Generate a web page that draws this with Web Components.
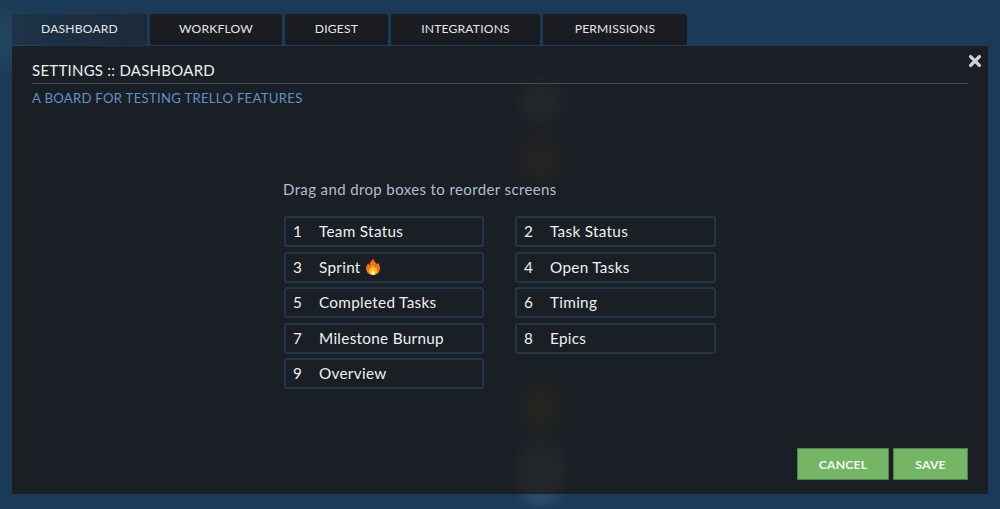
<!DOCTYPE html>
<html>
<head>
<meta charset="utf-8">
<title>Settings</title>
<style>
  html, body { margin: 0; height: 100%; }
  body {
    background:
      radial-gradient(ellipse 26px 12px at 541px 498px, #2f5270, transparent),
      radial-gradient(ellipse 50px 40px at 5px 40px, #24465f, transparent),
      #1b3a57;
    overflow: hidden;
    font-family: Lato, "Open Sans", sans-serif;
  }
</style>
</head>
<body>
<settings-dialog>
  <tab-button active style="width:135px">DASHBOARD</tab-button>
  <tab-button style="width:132px">WORKFLOW</tab-button>
  <tab-button style="width:103px">DIGEST</tab-button>
  <tab-button style="width:149px">INTEGRATIONS</tab-button>
  <tab-button style="width:144px">PERMISSIONS</tab-button>

  <screen-box slot="screens" num="1">Team Status</screen-box>
  <screen-box slot="screens" num="2">Task Status</screen-box>
  <screen-box slot="screens" num="3">Sprint <fire-icon></fire-icon></screen-box>
  <screen-box slot="screens" num="4">Open Tasks</screen-box>
  <screen-box slot="screens" num="5">Completed Tasks</screen-box>
  <screen-box slot="screens" num="6">Timing</screen-box>
  <screen-box slot="screens" num="7">Milestone Burnup</screen-box>
  <screen-box slot="screens" num="8">Epics</screen-box>
  <screen-box slot="screens" num="9">Overview</screen-box>

  <green-button slot="actions" style="width:92px">CANCEL</green-button>
  <green-button slot="actions" style="width:75px">SAVE</green-button>
</settings-dialog>

<script>
class TabButton extends HTMLElement {
  constructor() {
    super();
    this.attachShadow({ mode: 'open' });
    this.shadowRoot.innerHTML = `
      <style>
        :host {
          display: flex;
          align-items: center;
          justify-content: center;
          box-sizing: border-box;
          height: 31px;
          padding-bottom: 2px;
          background: #1a1c21;
          border-radius: 2px;
          color: #e4e6e8;
          font-size: 12.1px;
          letter-spacing: 0.2px;
        }
        :host([active]) {
          background: linear-gradient(90deg, #1d3348, #1c2a39);
        }
      </style>
      <slot></slot>
    `;
  }
}

class ScreenBox extends HTMLElement {
  constructor() {
    super();
    this.attachShadow({ mode: 'open' });
    this.shadowRoot.innerHTML = `
      <style>
        :host {
          display: flex;
          align-items: center;
          box-sizing: border-box;
          height: 31px;
          padding-bottom: 1px;
          border: 2px solid #22364a;
          border-radius: 3px;
          color: #eef0f1;
          font-size: 15.3px;
          letter-spacing: 0.3px;
        }
        .num { width: 33px; padding-left: 7px; box-sizing: border-box; }
      </style>
      <span class="num"></span><span><slot></slot></span>
    `;
    this.shadowRoot.querySelector('.num').textContent = this.getAttribute('num');
  }
}

class FireIcon extends HTMLElement {
  constructor() {
    super();
    this.attachShadow({ mode: 'open' });
    this.shadowRoot.innerHTML = `
      <style>
        :host { display: inline-block; width: 14px; height: 16px; vertical-align: -2px; margin-left: 1px; }
        svg { display: block; }
      </style>
      <svg width="14" height="16" viewBox="0 0 14 16">
        <path fill="#f0701c" d="M7.500 0c.6 2.600 2.200 3.600 3.600 5.400.4-.5.6-1.100.6-1.800C13.200 5.200 14 7.200 14 9.400 14 13.200 11 16 7 16S0 13.200 0 9.500c0-2.400 1.300-3.900 2.500-5.300.1.900.4 1.500 1 2C3.500 3.800 5 1.500 7.500 0z"/>
        <path fill="#fcc21b" d="M7.300 6.500c.3 1.500 1.300 2.200 2.200 3.300.3-.2.500-.5.600-.9.800 1 1.200 2 1.200 3 0 2.300-1.900 4-4.300 4S2.700 14.200 2.700 12c0-1.400.7-2.400 1.600-3.200.1.500.3.800.6 1.100C5 8.500 5.900 7.300 7.300 6.500z"/>
        <path fill="#fff3c4" d="M7 11.500c.7.800 1.800 1.500 1.800 2.800 0 1-.8 1.700-1.800 1.700s-1.800-.7-1.800-1.700c0-1.300 1.100-2 1.800-2.800z"/>
      </svg>
    `;
  }
}

class GreenButton extends HTMLElement {
  constructor() {
    super();
    this.attachShadow({ mode: 'open' });
    this.shadowRoot.innerHTML = `
      <style>
        :host {
          display: flex;
          align-items: center;
          justify-content: center;
          box-sizing: border-box;
          height: 32px;
          background: #74b566;
          border: 1px solid #4c8348;
          color: #f3f8f1;
          font-size: 12.2px;
          font-weight: 700;
          letter-spacing: 0.2px;
        }
      </style>
      <slot></slot>
    `;
  }
}

class SettingsDialog extends HTMLElement {
  constructor() {
    super();
    this.attachShadow({ mode: 'open' });
    this.shadowRoot.innerHTML = `
      <style>
        :host {
          display: flex;
          flex-direction: column;
          box-sizing: border-box;
          width: 1000px;
          height: 509px;
          padding: 14px 12px 15px;
        }
        .tabs { display: flex; gap: 3px; margin-bottom: 1px; }
        .panel {
          position: relative;
          flex: 1;
          display: flex;
          flex-direction: column;
          padding: 0 20px;
          background:
            radial-gradient(ellipse 34px 36px at 529px 56px, #23272a 25%, transparent),
            radial-gradient(ellipse 34px 34px at 529px 114px, #232420 20%, transparent),
            radial-gradient(ellipse 34px 36px at 529px 362px, #232420 20%, transparent),
            radial-gradient(ellipse 36px 42px at 529px 425px, #25282a 30%, transparent),
            radial-gradient(ellipse 130px 16px at 640px 60px, #1b2027, transparent),
            radial-gradient(ellipse 90px 14px at 620px 114px, #1b2027, transparent),
            #1a1e25;
        }
        .title {
          margin-top: 15px;
          color: #eceef0;
          font-size: 15px;
          line-height: 18px;
          letter-spacing: 0.25px;
          padding-bottom: 4px;
          border-bottom: 1px solid #3b4b5b;
        }
        .sub {
          margin-top: 6px;
          color: #5f93c8;
          font-size: 13.2px;
          line-height: 16px;
          letter-spacing: 0.26px;
        }
        .close {
          position: absolute;
          top: 8px;
          right: 6px;
          width: 14px;
          height: 14px;
        }
        .body {
          display: flex;
          flex-direction: column;
          margin: 74px 0 0 252px;
          width: 432px;
        }
        .hint {
          color: #aebfd0;
          font-size: 15px;
          line-height: 18px;
          letter-spacing: 0.38px;
          margin: 0 0 18px -1px;
        }
        .grid {
          display: grid;
          grid-template-columns: 200px 201px;
          column-gap: 31px;
          row-gap: 4.6px;
        }
        .actions {
          margin-top: auto;
          margin-bottom: 14px;
          display: flex;
          justify-content: flex-end;
          gap: 4px;
        }
      </style>
      <div class="tabs"><slot></slot></div>
      <div class="panel">
        <svg class="close" viewBox="0 0 14 14">
          <path d="M2.600 2.600L11.400 11.400M11.400 2.600L2.600 11.400" stroke="#cfd1d4" stroke-width="3.400" stroke-linecap="round"/>
        </svg>
        <div class="title">SETTINGS :: DASHBOARD</div>
        <div class="sub">A BOARD FOR TESTING TRELLO FEATURES</div>
        <div class="body">
          <div class="hint">Drag and drop boxes to reorder screens</div>
          <div class="grid"><slot name="screens"></slot></div>
        </div>
        <div class="actions"><slot name="actions"></slot></div>
      </div>
    `;
  }
}

customElements.define('tab-button', TabButton);
customElements.define('screen-box', ScreenBox);
customElements.define('fire-icon', FireIcon);
customElements.define('green-button', GreenButton);
customElements.define('settings-dialog', SettingsDialog);
</script>
</body>
</html>
